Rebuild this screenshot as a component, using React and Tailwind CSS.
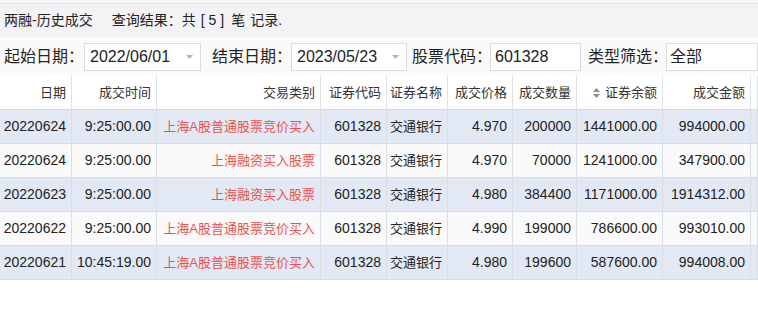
import React from "react";

const rows = [
  ["20220624", "9:25:00.00", "上海A股普通股票竞价买入", "601328", "交通银行", "4.970", "200000", "1441000.00", "994000.00"],
  ["20220624", "9:25:00.00", "上海融资买入股票", "601328", "交通银行", "4.970", "70000", "1241000.00", "347900.00"],
  ["20220623", "9:25:00.00", "上海融资买入股票", "601328", "交通银行", "4.980", "384400", "1171000.00", "1914312.00"],
  ["20220622", "9:25:00.00", "上海A股普通股票竞价买入", "601328", "交通银行", "4.990", "199000", "786600.00", "993010.00"],
  ["20220621", "10:45:19.00", "上海A股普通股票竞价买入", "601328", "交通银行", "4.980", "199600", "587600.00", "994008.00"],
];

const headers = ["日期", "成交时间", "交易类别", "证券代码", "证券名称", "成交价格", "成交数量", "证券余额", "成交金额", ""];

const cols = "grid grid-cols-[72px_85px_164px_66px_61px_65px_64px_86px_88px_1fr]";

function Arrow() {
  return (
    <svg width="7" height="4" viewBox="0 0 7 4" className="text-[#b4b4b4]">
      <path d="M0 0h7L3.5 4z" fill="currentColor" />
    </svg>
  );
}

function SortIcon() {
  return (
    <svg width="7" height="10" viewBox="0 0 7 10" className="mr-[5px] text-[#8a8f99]">
      <path d="M3.5 0L7 4H0z M3.5 10L0 6h7z" fill="currentColor" />
    </svg>
  );
}

function Label({ w, children }) {
  return <span className={`${w} text-[16px] text-[#222] whitespace-nowrap`}>{children}</span>;
}

export default function App() {
  return (
    <div className="w-[758px] h-[312px] overflow-hidden bg-white font-['Liberation_Sans','Noto_Sans_CJK_SC',sans-serif] text-[14px] text-[#222]">
      <div className="h-[4px] bg-[#f7f7f8] border-b border-[#e4e5e8]" />
      <div className="h-[33px] bg-[#f3f3f5] flex items-center pl-[4px] whitespace-nowrap">
        <span>两融-历史成交</span>
        <span className="ml-[19px]">查询结果：共</span>
        <span className="ml-[5px]">[</span>
        <span className="ml-[4px]">5</span>
        <span className="ml-[4px]">]</span>
        <span className="ml-[7px]">笔</span>
        <span className="ml-[5px]">记录.</span>
      </div>
      <div className="h-[39px] bg-[#fafafa] flex items-center pl-[4px]">
        <Label w="w-[80px]">起始日期：</Label>
        <div className="w-[117px] h-[28px] bg-white border border-[#dcdcdc] flex items-center justify-between pl-[5px] pr-[7px] text-[16px]">
          <span>2022/06/01</span>
          <Arrow />
        </div>
        <span className="ml-[11px] w-[79px] flex"><Label>结束日期：</Label></span>
        <div className="w-[116px] h-[28px] bg-white border border-[#dcdcdc] flex items-center justify-between pl-[5px] pr-[7px] text-[16px]">
          <span>2023/05/23</span>
          <Arrow />
        </div>
        <span className="ml-[5px] w-[78px] flex"><Label>股票代码：</Label></span>
        <div className="w-[91px] h-[28px] bg-white border border-[#dcdcdc] flex items-center pl-[4px] text-[16px]">
          601328
        </div>
        <span className="ml-[7px] w-[78px] flex"><Label>类型筛选：</Label></span>
        <div className="flex-1 h-[28px] bg-white border border-[#dcdcdc] flex items-center pl-[3px] text-[16px]">
          全部
        </div>
      </div>
      <div className={`${cols} h-[34px] bg-white border-b border-[#d5dbe5] text-[#333] text-[13px]`}>
        {headers.map((h, i) => (
          <div key={i} className="border-r border-[#dde1e8] flex items-center justify-end pr-[5px] whitespace-nowrap">
            {i === 7 && <SortIcon />}
            {h}
          </div>
        ))}
      </div>
      {rows.map((r, ri) => (
        <div
          key={ri}
          className={`${cols} h-[34px] border-b border-[#d5dbe5] ${ri % 2 === 0 ? "bg-[#e3e9f4]" : "bg-[#fafafa]"}`}
        >
          {[...r, ""].map((c, ci) => (
            <div
              key={ci}
              className={`border-r border-[#d8dde6] flex items-center justify-end pr-[5px] whitespace-nowrap ${ci === 2 ? "text-[#e8524f] text-[13px]" : ""} ${ci === 4 ? "text-[13px]" : ""}`}
            >
              {c}
            </div>
          ))}
        </div>
      ))}
    </div>
  );
}
